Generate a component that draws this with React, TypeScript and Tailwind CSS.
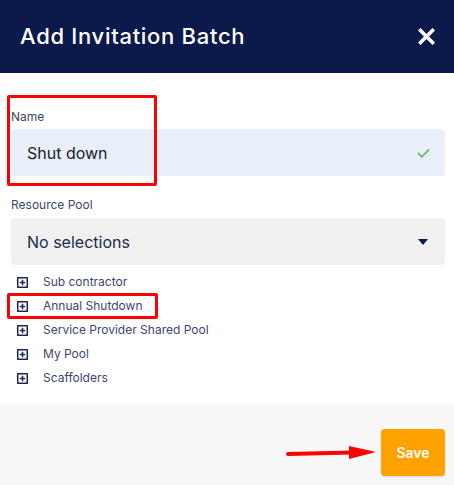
import React from "react";

const pools = ["Sub contractor", "Annual Shutdown", "Service Provider Shared Pool", "My Pool", "Scaffolders"];

const PlusBox = () => (
	<svg width="11" height="11" viewBox="0 0 11 11" className="shrink-0">
		<rect x="0.75" y="0.75" width="9.5" height="9.5" fill="none" stroke="#1d2a55" strokeWidth="1.5" />
		<path d="M5.5 2.8v5.4M2.8 5.5h5.4" stroke="#1d2a55" strokeWidth="1.6" />
	</svg>
);

export default function App() {
	return (
		<div className="relative w-[454px] h-[485px] bg-white overflow-hidden font-['Inter',sans-serif]">
			{/* header */}
			<div className="h-[73px] bg-[#0b1a4b] flex items-center justify-between pl-5 pr-[19px]">
				<h2 className="text-white text-[22px] font-medium tracking-[0.7px]">Add Invitation Batch</h2>
				<svg width="17" height="17" viewBox="0 0 17 17">
					<path d="M2.5 2.5l12 12M14.5 2.5l-12 12" stroke="#fff" strokeWidth="3.6" strokeLinecap="square" />
				</svg>
			</div>

			<div className="pl-[11px] pr-[9px] pt-[36px] pb-[14px]">
				<label className="block text-[12px] leading-4 text-[#3b4568] mb-1">Name</label>
				<div className="h-[47px] rounded bg-[#e8effb] flex items-center justify-between pl-4 pr-[15px]">
					<span className="text-[16px] text-[#222]">Shut down</span>
					<svg width="13" height="10" viewBox="0 0 13 10">
						<path d="M1 5l3.8 3.8L12 1.5" fill="none" stroke="#6cb86e" strokeWidth="1.8" />
					</svg>
				</div>

				<label className="block text-[12px] leading-4 text-[#3b4568] mt-[21px] mb-[5px]">Resource Pool</label>
				<div className="h-[47px] rounded bg-[#f0f0f0] flex items-center justify-between pl-4 pr-[17px]">
					<span className="text-[16px] text-[#1d2a4d]">No selections</span>
					<svg width="10" height="6" viewBox="0 0 10 6">
						<path d="M0 0h10L5 6z" fill="#0b1a4b" />
					</svg>
				</div>

				<ul className="mt-[5px]">
					{pools.map((p) => (
						<li key={p} className="h-6 flex items-center gap-[15px] pl-[6px]">
							<PlusBox />
							<span className="text-[12px] text-[#3c4670]">{p}</span>
						</li>
					))}
				</ul>
			</div>

			{/* footer */}
			<div className="h-[81px] bg-[#f8f8f8] flex justify-end pt-[25px] pr-[9px]">
				<button className="w-[64px] h-[47px] rounded bg-[#ffa200] text-white text-[14px] font-semibold shadow-sm">
					Save
				</button>
			</div>

			{/* annotations */}
			<div className="absolute left-[7px] top-[95px] w-[150px] h-[91px] border-[3px] border-[#ff0000] rounded-[2px]" />
			<div className="absolute left-[7px] top-[293px] w-[151px] h-[26px] border-[3px] border-[#ff0000] rounded-[2px]" />
			<svg className="absolute left-[286px] top-[444px]" width="92" height="18" viewBox="0 0 92 18">
				<path d="M2 10L66 8.5" stroke="#ff0000" strokeWidth="4" strokeLinecap="round" />
				<path d="M63 2L90 8L63 15z" fill="#ff0000" />
			</svg>
		</div>
	);
}
